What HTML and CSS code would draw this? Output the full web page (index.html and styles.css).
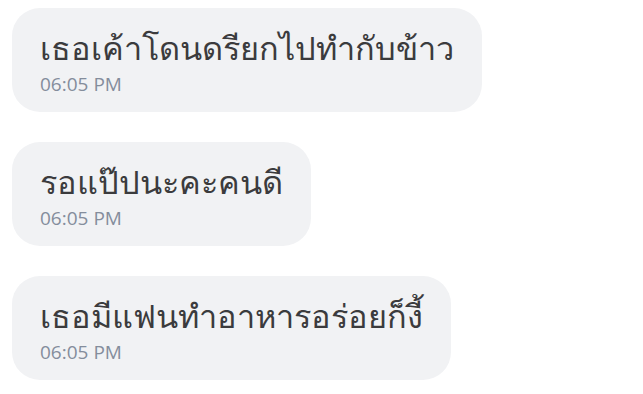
FILE: index.html
```html
<html>
	<head>
		<link rel="stylesheet" href="styles.css">
	</head>

	<body>
		<div class="Chat">
			<div class="Bubble">
				<div class="Text">เธอเค้าโดนดรียกไปทำกับข้าว</div>
				<div class="Time">06:05 PM</div>
			</div>
			<div class="Bubble">
				<div class="Text">รอแป๊ปนะคะคนดี</div>
				<div class="Time">06:05 PM</div>
			</div>
			<div class="Bubble">
				<div class="Text">เธอมีแฟนทำอาหารอร่อยก็งี้</div>
				<div class="Time">06:05 PM</div>
			</div>
		</div>
	</body>
</html>
```

FILE: styles.css
```css
body{
	margin: 0;
	background-color: #fff;
	font-family: "Open Sans", "Noto Sans", sans-serif;
}
div.Chat{
	display: flex;
	flex-direction: column;
	align-items: flex-start;
	gap: 30px;
	padding: 8px 12px;
}
div.Bubble{
	background-color: #f1f2f4;
	border-radius: 28px;
	padding: 18px 28px 14px 28px;
}
div.Bubble > .Text{
	font-size: 32.5px;
	line-height: 44px;
	color: #3b3b3d;
}
div.Bubble > .Time{
	font-size: 19px;
	line-height: 28px;
	color: #848d9c;
}
```
